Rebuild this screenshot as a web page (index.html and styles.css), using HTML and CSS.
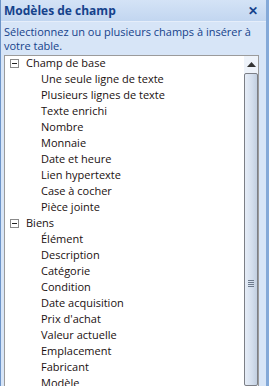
FILE: index.html
```html
<!DOCTYPE html>
<html lang="fr">
<head>
<meta charset="utf-8">
<link rel="stylesheet" href="styles.css">
</head>
<body>
<div class="panel">
  <div class="titlebar">
    <span class="title">Modèles de champ</span>
    <span class="close">✕</span>
  </div>
  <div class="desc">Sélectionnez un ou plusieurs champs à insérer à votre table.</div>
  <div class="listbox">
    <div class="tree">
      <div class="node"><span class="toggle"></span><span>Champ de base</span></div>
      <div class="leaf">Une seule ligne de texte</div>
      <div class="leaf">Plusieurs lignes de texte</div>
      <div class="leaf">Texte enrichi</div>
      <div class="leaf">Nombre</div>
      <div class="leaf">Monnaie</div>
      <div class="leaf">Date et heure</div>
      <div class="leaf">Lien hypertexte</div>
      <div class="leaf">Case à cocher</div>
      <div class="leaf">Pièce jointe</div>
      <div class="node"><span class="toggle"></span><span>Biens</span></div>
      <div class="leaf">Élément</div>
      <div class="leaf">Description</div>
      <div class="leaf">Catégorie</div>
      <div class="leaf">Condition</div>
      <div class="leaf">Date acquisition</div>
      <div class="leaf">Prix d'achat</div>
      <div class="leaf">Valeur actuelle</div>
      <div class="leaf">Emplacement</div>
      <div class="leaf">Fabricant</div>
      <div class="leaf">Modèle</div>
    </div>
    <div class="scrollbar">
      <div class="arrow"><svg width="9" height="5" viewBox="0 0 9 5"><path d="M0 5 L4.5 0 L9 5 Z" fill="#333"/></svg></div>
      <div class="thumb"><div class="grip"></div></div>
    </div>
  </div>
</div>
</body>
</html>
```
FILE: styles.css
```css
html, body {
  margin: 0;
  padding: 0;
  overflow: hidden;
}
body {
  width: 269px;
  height: 386px;
  font-family: "Open Sans", "Noto Sans", sans-serif;
  font-size: 11px;
}
.panel {
  box-sizing: border-box;
  width: 269px;
  height: 386px;
  background: #d7e5f7;
  border-left: 1px solid #6d94c8;
  border-right: 3px solid #84a9d8;
  display: flex;
  flex-direction: column;
}
.titlebar {
  height: 21px;
  flex: none;
  background: linear-gradient(#d4e3f6, #c2d6f0);
  border-bottom: 1px solid #e6eefa;
  display: flex;
  align-items: center;
  justify-content: space-between;
  padding: 0 8px 0 3px;
}
.title {
  color: #15428b;
  font-weight: bold;
  font-size: 12px;
}
.close {
  color: #15428b;
  font-size: 12px;
  font-weight: bold;
}
.desc {
  color: #15428b;
  line-height: 14px;
  padding: 3px 2px 2px 3px;
}
.listbox {
  flex: 1;
  margin: 0 7px 0 3px;
  background: #fff;
  border: 1px solid #9b9b9b;
  border-bottom: none;
  display: flex;
  overflow: hidden;
}
.tree {
  flex: 1;
  margin-top: -1px;
  color: #1a1010;
}
.node, .leaf {
  height: 16px;
  line-height: 16px;
  white-space: nowrap;
}
.node {
  display: flex;
  align-items: center;
  padding-left: 5px;
}
.toggle {
  box-sizing: border-box;
  width: 9px;
  height: 9px;
  border: 1px solid #8a8a8a;
  margin-right: 7px;
  position: relative;
  background: #fff;
}
.toggle::after {
  content: "";
  position: absolute;
  left: 1px;
  right: 1px;
  top: 3px;
  height: 1px;
  background: #222;
}
.leaf {
  padding-left: 36px;
}
.scrollbar {
  width: 14px;
  flex: none;
  background: #eef3fa;
  display: flex;
  flex-direction: column;
}
.arrow {
  height: 16px;
  display: flex;
  align-items: center;
  justify-content: center;
}
.thumb {
  flex: 1;
  margin-top: 1px;
  border: 1px solid #7c7f86;
  border-radius: 2px;
  background: linear-gradient(90deg, #e6edf7, #d3deed 60%, #c2cfe0);
  position: relative;
}
.grip {
  position: absolute;
  left: 3px;
  right: 3px;
  top: 206px;
  height: 7px;
  background: repeating-linear-gradient(#6d7a8c 0 1px, transparent 1px 2px);
}
```
